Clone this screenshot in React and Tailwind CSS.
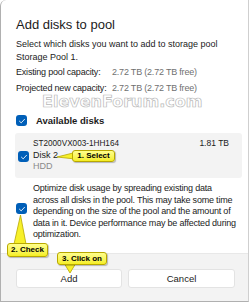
import React from 'react'

function Check({ className }) {
    return (
        <span className={"flex shrink-0 items-center justify-center rounded-[3px] bg-[#005fb8] " + className}>
            <svg viewBox="0 0 12 12" className="w-[8px] h-[8px]" fill="none" stroke="white" strokeWidth="1.3" strokeLinecap="round" strokeLinejoin="round">
                <path d="M2.2 6.3 4.8 8.8 9.8 3.4" />
            </svg>
        </span>
    )
}

function Callout({ text, className }) {
    return (
        <div className={"absolute rounded-[3px] border border-[#b8a800] bg-gradient-to-b from-[#ffff8a] to-[#f5ee1c] text-black font-bold text-[8px] leading-none flex items-center justify-center shadow-[1px_1px_1px_rgba(0,0,0,0.25)] " + className}>
            {text}
        </div>
    )
}

export default function App() {
    return (
        <div className="relative w-[250px] h-[304px] overflow-hidden bg-white text-[#1b1b1b]" style={{ fontFamily: '"Liberation Sans", Arial, sans-serif' }}>
            <div className="absolute left-0 top-0 w-[249px] h-[302px] rounded-tl-[6px] border-l border-b border-r border-[#b0b0b0] border-r-[#cfcfcf] pointer-events-none" />
            <div className="flex flex-col h-[302px]">
                <div className="pl-[16px] pt-[17px] flex-1">
                    <h1 className="text-[13px] leading-[16px]">Add disks to pool</h1>
                    <p className="mt-[5px] text-[9px] leading-[13px]">Select which disks you want to add to storage pool<br />Storage Pool 1.</p>
                    <div className="text-[9px] leading-[16px] tracking-[-0.2px]">
                        <div className="flex"><span className="w-[96px] whitespace-nowrap">Existing pool capacity:</span><span className="text-[#707070]">2.72 TB (2.72 TB free)</span></div>
                        <div className="flex"><span className="w-[96px] whitespace-nowrap">Projected new capacity:</span><span className="text-[#707070]">2.72 TB (2.72 TB free)</span></div>
                    </div>
                    <div className="mt-[19px] h-[11px] flex items-center gap-[9px]">
                        <Check className="w-[11px] h-[11px]" />
                        <span className="text-[9.5px] font-bold leading-[11px]">Available disks</span>
                    </div>
                    <div className="mt-[7px] -ml-[1px] w-[227px] h-[45px] rounded-[3px] bg-[#f3f3f3] flex pl-[3px] pr-[13px] pt-[5px] text-[9px] leading-[11.5px]">
                        <div className="pt-[13px]"><Check className="w-[11px] h-[11px]" /></div>
                        <div className="ml-[4px] flex-1">
                            <div className="text-[8.2px]">ST2000VX003-1HH164</div>
                            <div>Disk 2</div>
                            <div className="text-[#8a8a8a]">HDD</div>
                        </div>
                        <div className="text-[8.5px]">1.81 TB</div>
                    </div>
                    <div className="mt-[5px] flex">
                        <div className="pt-[20px]"><Check className="w-[11px] h-[11px]" /></div>
                        <p className="ml-[6px] text-[9px] leading-[11.6px] tracking-[-0.2px] whitespace-nowrap">
                            Optimize disk usage by spreading existing data<br />
                            across all disks in the pool. This may take some time<br />
                            depending on the size of the pool and the amount of<br />
                            data in it. Device performance may be affected during<br />
                            optimization.
                        </p>
                    </div>
                </div>
                <div className="h-[49px] w-[249px] bg-[#f3f3f3] border-t border-[#e8e8e8] flex gap-[6px] pl-[16px] pt-[15px]">
                    <button className="w-[106px] h-[19px] rounded-[3px] bg-white border border-[#e3e3e3] text-[9.5px] leading-none">Add</button>
                    <button className="w-[107px] h-[19px] rounded-[3px] bg-white border border-[#e3e3e3] text-[9.5px] leading-none">Cancel</button>
                </div>
            </div>

            <div className="absolute left-[42px] top-[94px] text-[16px] font-bold leading-none text-white [-webkit-text-stroke:0.7px_#b8b8b8]" style={{ fontFamily: '"DejaVu Sans", sans-serif' }}>ElevenForum.com</div>

            <svg className="absolute left-0 top-0 pointer-events-none" width="250" height="304">
                <path d="M57 157 L75 152.5 L75 159 Z" fill="#f7f02a" stroke="#b8a800" strokeWidth="0.8" />
                <path d="M20.5 215 L14 244 L26 244 Z" fill="#f7f02a" stroke="#b8a800" strokeWidth="0.8" />
                <path d="M70 273 L64 263 L76 263 Z" fill="#f7f02a" stroke="#b8a800" strokeWidth="0.8" />
            </svg>
            <Callout text="1. Select" className="left-[72px] top-[150px] w-[43px] h-[12px]" />
            <Callout text="2. Check" className="left-[7px] top-[243px] w-[41px] h-[14px]" />
            <Callout text="3. Click on" className="left-[57px] top-[252px] w-[50px] h-[13px]" />
        </div>
    )
}
